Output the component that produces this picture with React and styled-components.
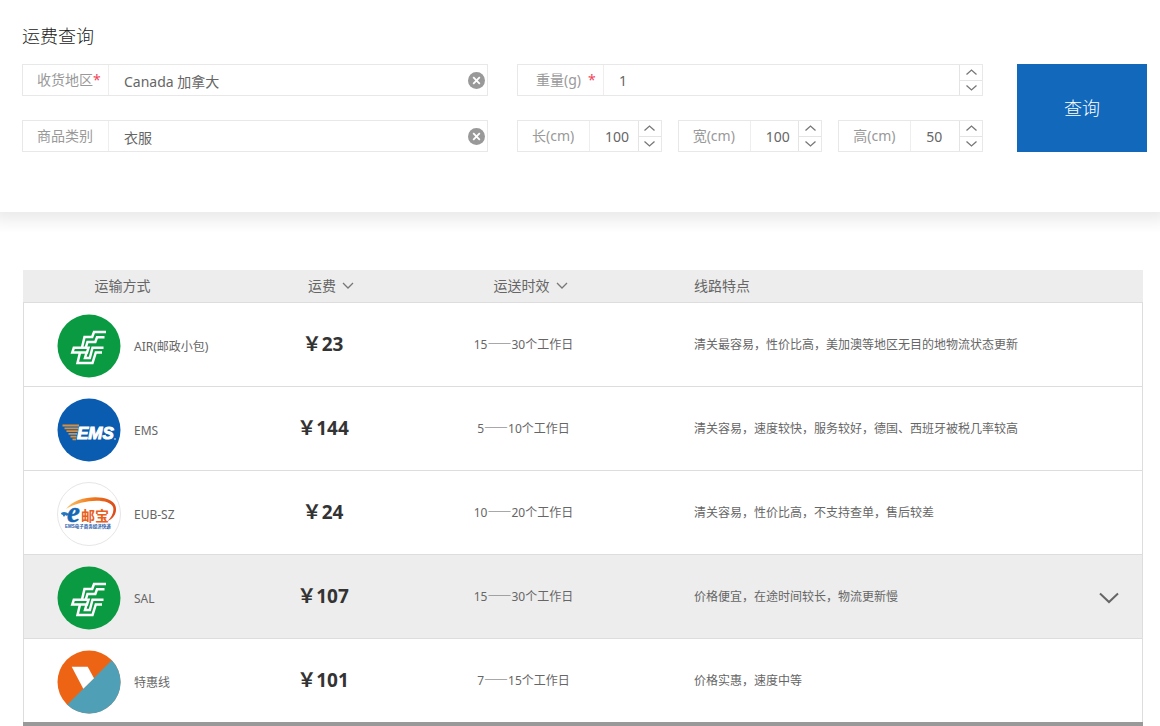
import React, { useState } from 'react';
import styled, { createGlobalStyle } from 'styled-components';

const GlobalStyle = createGlobalStyle`
    * {
        box-sizing: border-box;
    }
    body {
        background-color: #fff;
        color: #666;
        font-family: "Noto Sans", "Noto Sans CJK SC", sans-serif;
        font-size: 14px;
        margin: 0;
    }
    button, input {
        font-family: inherit;
    }
`;

const SearchSection = styled.section`
    box-shadow: 0 0 16px 8px rgba(0, 0, 0, 0.09);
    clip-path: inset(0 0 -20px 0);
    padding: 24px 13px 60px 22px;
`;

const Title = styled.h1`
    color: #222;
    font-size: 18px;
    font-weight: 300;
    line-height: 24px;
    margin: 0 0 16px;
`;

const Form = styled.form`
    display: flex;
    gap: 34px;
`;

const Fields = styled.div`
    display: grid;
    flex: 1;
    gap: 24px 29px;
    grid-template-columns: 1fr 1fr;
`;

const Sizes = styled.div`
    display: grid;
    gap: 16px;
    grid-template-columns: repeat(3, 1fr);
`;

const Field = styled.div`
    border: 1px solid #e8e8e8;
    display: flex;
    height: 32px;
    min-width: 0;
`;

const Label = styled.label`
    border-right: 1px solid #eee;
    color: #999;
    flex: none;
    line-height: 30px;
    padding-left: ${props => props.$indent || "14px"};
    white-space: nowrap;
    width: ${props => props.$width || "86px"};
`;

const Required = styled.span`
    color: #f0465a;
    margin-left: ${props => props.$spaced ? "7px" : 0};
`;

const Input = styled.input`
    appearance: none;
    background: none;
    border: 0;
    color: #666;
    flex: 1;
    font-size: 14px;
    min-width: 0;
    outline: 0;
    padding: 1px 0 0 15px;
`;

const ClearBtn = styled.button`
    align-self: center;
    background: none;
    border: 0;
    cursor: pointer;
    display: flex;
    margin-right: 2px;
    padding: 0;
`;

const Stepper = styled.div`
    border-left: 1px solid #e4e4e4;
    display: flex;
    flex: none;
    flex-direction: column;
    width: 23px;
`;

const StepBtn = styled.button`
    align-items: center;
    background: none;
    border: 0;
    cursor: pointer;
    display: flex;
    flex: 1;
    justify-content: center;
    padding: 0;
    & + & {
        border-top: 1px solid #e4e4e4;
    }
`;

const SubmitBtn = styled.button`
    background-color: #1268bb;
    border: 0;
    color: #fff;
    cursor: pointer;
    flex: none;
    font-size: 18px;
    font-weight: 300;
    padding: 0 0 2px;
    width: 130px;
`;

const Results = styled.main`
    padding: 58px 17px 0 23px;
`;

const Table = styled.table`
    border-bottom: 4px solid #999;
    border-collapse: separate;
    border-spacing: 0;
    table-layout: fixed;
    width: 100%;
`;

const Th = styled.th`
    background-color: #ededed;
    border-bottom: 1px solid #ddd;
    font-weight: 400;
    height: 33px;
    padding: 0 0 2px ${props => props.$indent || 0};
    text-align: ${props => props.$align || "center"};
    width: ${props => props.$width};
`;

const SortBtn = styled.button`
    align-items: center;
    background: none;
    border: 0;
    color: inherit;
    cursor: pointer;
    display: inline-flex;
    font-size: 14px;
    gap: 6px;
    padding: 0 0 0 14px;
`;

const Row = styled.tr`
    background-color: ${props => props.$active ? "#ededed" : "#fff"};
`;

const Td = styled.td`
    border-bottom: 1px solid #ddd;
    font-size: 12px;
    height: 84px;
    padding: 0 0 2px ${props => props.$indent || 0};
    text-align: ${props => props.$align || "center"};
    &:first-child {
        border-left: 1px solid #ddd;
    }
    &:last-child {
        border-right: 1px solid #ddd;
        padding: 0;
    }
    ${Row}:last-child & {
        border-bottom: 0;
        height: 83px;
    }
`;

const Carrier = styled.div`
    align-items: center;
    display: flex;
    gap: 13px;
    padding: 11px 0 6px 33px;
`;

const Logo = styled.svg`
    display: block;
    flex: none;
    height: 64px;
    width: 64px;
`;

const Price = styled.strong`
    color: #333;
    display: block;
    font-size: 19px;
    font-weight: 700;
    line-height: 20px;
    padding-right: 2px;
`;

const Dash = styled.span`
    font-family: "Noto Sans CJK SC", sans-serif;
    line-height: 1;
`;

const ExpandBtn = styled.button`
    background: none;
    border: 0;
    cursor: pointer;
    padding: 0;
    vertical-align: middle;
`;

const Icon = styled.svg`
    display: block;
    fill: none;
    stroke: ${props => props.$color || "#777"};
    stroke-width: ${props => props.$weight || 1.3};
`;

const ClearIcon = () => (
    <svg width="17" height="17" viewBox="0 0 17 17">
        <circle cx="8.5" cy="8.5" r="8.5" fill="#999" />
        <path d="M5.2 5.2l6.6 6.6M11.8 5.2l-6.6 6.6" stroke="#fff" strokeWidth="1.8" />
    </svg>
);

const PostLogo = () => (
    <Logo viewBox="0 0 64 64">
        <circle cx="32" cy="32" r="31.5" fill="#0a9b42" />
        <g fill="none" stroke="#fff" strokeWidth="2.5">
            <path d="M49 18H37l-1.8 5H27.500L25 33.500" />
            <path d="M47.500 23.300H40L38.300 28H30.500L28.800 33.500" />
            <path d="M46.500 33.800H35.500L32.800 44H28l1.600-5.500" />
            <path d="M45 38.500H38.800L35.500 49H20.500L23 38.500" />
            <path d="M16.800 33.800H31.500L30 38.500H15.300z" />
        </g>
    </Logo>
);

const EmsLogo = () => (
    <Logo viewBox="0 0 64 64">
        <circle cx="32" cy="32" r="31.5" fill="#0a5cb0" />
        <path
            d="M5.500 27.500H22M7.500 30.300H21.500M9.500 33.100H20.800M11.500 35.900H20M13.500 38.700H19.500M15.500 41.300H19"
            stroke="#d98f3c"
            strokeWidth="1.8"
        />
        <text
            x="20"
            y="41"
            fill="#fff"
            stroke="#fff"
            strokeWidth="1"
            fontFamily="Liberation Sans Narrow, Liberation Sans, sans-serif"
            fontSize="17"
            fontStyle="italic"
            fontWeight="700"
        >
            EMS
        </text>
        <circle cx="58" cy="41" r="0.900" fill="#9fc3e6" />
    </Logo>
);

const EubLogo = () => (
    <Logo viewBox="0 0 64 64">
        <defs>
            <linearGradient id="swoosh">
                <stop offset="0" stopColor="#fbc56b" />
                <stop offset="0.5" stopColor="#f07a1c" />
                <stop offset="1" stopColor="#dc4a1a" />
            </linearGradient>
        </defs>
        <circle cx="32" cy="32" r="31.5" fill="#fff" stroke="#e6e6e6" />
        <path
            d="M9 27C20 12 55 12 58.500 24c2 7-2 13-8 15 4-4 7-9 5.500-14C52 16 26 17 9 27z"
            fill="url(#swoosh)"
        />
        <path d="M4 31c3-2 5-1 8 1-1 2-3 2-4 1 0 2-2 2-2 0-1 0-2-1-2-2z" fill="#2678bf" />
        <text
            x="10"
            y="40"
            fill="#1668b3"
            stroke="#1668b3"
            strokeWidth="0.5"
            fontFamily="Liberation Serif, serif"
            fontSize="29"
            fontStyle="italic"
            fontWeight="700"
        >
            e
        </text>
        <text
            x="24"
            y="39"
            fill="#e8601c"
            fontFamily="Liberation Sans, Noto Sans CJK SC, sans-serif"
            fontSize="14"
            fontWeight="700"
        >
            邮宝
        </text>
        <text
            x="8"
            y="46"
            fill="#2a5da8"
            fontFamily="Liberation Sans, Noto Sans CJK SC, sans-serif"
            fontSize="4.5"
            fontWeight="700"
        >
            EMS电子商务经济快递
        </text>
    </Logo>
);

const SpecialLogo = () => (
    <Logo viewBox="0 0 64 64">
        <circle cx="32" cy="32" r="31.5" fill="#ed6415" />
        <path d="M54.770 10.230A31.500 31.500 0 0 1 10.230 54.770z" fill="#4f9fb6" />
        <path d="M14.700 16.700h16l6.300 11.500L26.300 38.700z" fill="#fff" />
    </Logo>
);

const NumberField = ({ id, label, value, required, width, indent }) => {
    const [amount, setAmount] = useState(value);
    const step = delta => setAmount(Math.max(0, Number(amount) + delta));
    return (
        <Field>
            <Label htmlFor={id} $width={width} $indent={indent}>
                {label}
                {required && <Required $spaced>*</Required>}
            </Label>
            <Input id={id} inputMode="numeric" value={amount} onChange={e => setAmount(e.target.value)} />
            <Stepper>
                <StepBtn type="button" aria-label={`${label} +`} onClick={() => step(1)}>
                    <Icon width="11" height="6" viewBox="0 0 11 6"><path d="M.5 5.500l5-4.500 5 4.500" /></Icon>
                </StepBtn>
                <StepBtn type="button" aria-label={`${label} -`} onClick={() => step(-1)}>
                    <Icon width="11" height="6" viewBox="0 0 11 6"><path d="M.5 .5l5 4.500 5-4.500" /></Icon>
                </StepBtn>
            </Stepper>
        </Field>
    );
}

const TextField = ({ id, label, value, required }) => {
    const [text, setText] = useState(value);
    return (
        <Field>
            <Label htmlFor={id}>
                {label}
                {required && <Required>*</Required>}
            </Label>
            <Input id={id} value={text} onChange={e => setText(e.target.value)} />
            <ClearBtn type="button" aria-label="清除" onClick={() => setText('')}>
                <ClearIcon />
            </ClearBtn>
        </Field>
    );
}

const SortHeader = ({ children }) => (
    <SortBtn type="button">
        {children}
        <Icon width="12" height="7" viewBox="0 0 12 7"><path d="M1 1l5 5 5-5" /></Icon>
    </SortBtn>
);

const routes = [
    { logo: <PostLogo />, name: 'AIR(邮政小包)', price: 23, days: [15, 30], feature: '清关最容易，性价比高，美加澳等地区无目的地物流状态更新' },
    { logo: <EmsLogo />, name: 'EMS', price: 144, days: [5, 10], feature: '清关容易，速度较快，服务较好，德国、西班牙被税几率较高' },
    { logo: <EubLogo />, name: 'EUB-SZ', price: 24, days: [10, 20], feature: '清关容易，性价比高，不支持查单，售后较差' },
    { logo: <PostLogo />, name: 'SAL', price: 107, days: [15, 30], feature: '价格便宜，在途时间较长，物流更新慢', active: true },
    { logo: <SpecialLogo />, name: '特惠线', price: 101, days: [7, 15], feature: '价格实惠，速度中等' },
];

const App = () => {
    return (
        <div lang="zh-CN">
            <GlobalStyle />
            <SearchSection>
                <Title>运费查询</Title>
                <Form onSubmit={e => e.preventDefault()}>
                    <Fields>
                        <TextField id="region" label="收货地区" value="Canada 加拿大" required />
                        <NumberField id="weight" label="重量(g)" value="1" width="86px" indent="18px" required />
                        <TextField id="category" label="商品类别" value="衣服" />
                        <Sizes>
                            <NumberField id="length" label="长(cm)" value="100" width="72px" />
                            <NumberField id="width" label="宽(cm)" value="100" width="72px" />
                            <NumberField id="height" label="高(cm)" value="50" width="72px" />
                        </Sizes>
                    </Fields>
                    <SubmitBtn type="submit">查询</SubmitBtn>
                </Form>
            </SearchSection>
            <Results>
                <Table>
                    <thead>
                        <tr>
                            <Th $width="199px">运输方式</Th>
                            <Th $width="204px"><SortHeader>运费</SortHeader></Th>
                            <Th $width="195px"><SortHeader>运送时效</SortHeader></Th>
                            <Th $align="left" $indent="73px">线路特点</Th>
                            <Th $width="68px" aria-label="展开" />
                        </tr>
                    </thead>
                    <tbody>
                        {routes.map(route => (
                            <Row key={route.name} $active={route.active}>
                                <Td $align="left">
                                    <Carrier>
                                        {route.logo}
                                        {route.name}
                                    </Carrier>
                                </Td>
                                <Td><Price>￥{route.price}</Price></Td>
                                <Td>{route.days[0]}<Dash>——</Dash>{route.days[1]}个工作日</Td>
                                <Td $align="left" $indent="73px">{route.feature}</Td>
                                <Td>
                                    {route.active && (
                                        <ExpandBtn type="button" aria-label="展开">
                                            <Icon $color="#666" $weight={2} width="20" height="12" viewBox="0 0 20 12">
                                                <path d="M1 1.500l9 8.500 9-8.500" />
                                            </Icon>
                                        </ExpandBtn>
                                    )}
                                </Td>
                            </Row>
                        ))}
                    </tbody>
                </Table>
            </Results>
        </div>
    );
}

export default App;
